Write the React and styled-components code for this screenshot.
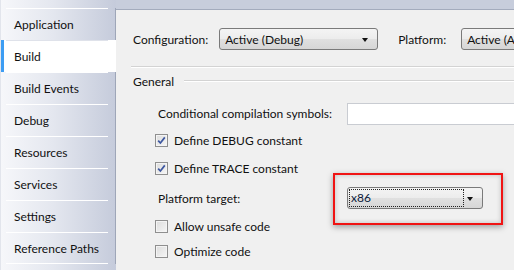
import React from 'react';
import styled, { createGlobalStyle } from 'styled-components';

const GlobalStyle = createGlobalStyle`
  html, body {
    margin: 0;
    padding: 0;
  }
  body {
    width: 514px;
    height: 270px;
    overflow: hidden;
    font-family: Lato, "Noto Sans", sans-serif;
    font-size: 12px;
    color: #111;
  }
`;

const tabs = [
  'Application',
  'Build',
  'Build Events',
  'Debug',
  'Resources',
  'Services',
  'Settings',
  'Reference Paths',
];

const Check = ({ checked }) => (
  <CheckBox>
    {checked && (
      <svg width="9" height="9" viewBox="0 0 9 9">
        <path d="M1.2 4.6 L3.4 7 L7.8 1.4" fill="none" stroke="#3d57a0" strokeWidth="1.7" />
      </svg>
    )}
  </CheckBox>
);

const App = () => {
  return (
    <Window>
      <GlobalStyle />
      <Sidebar>
        {tabs.map((t) => (
          <Tab key={t} $active={t === 'Build'}>{t}</Tab>
        ))}
      </Sidebar>
      <Panel>
        <TopRow>
          <Label $right={11}>Configuration:</Label>
          <Combo $w={159}>
            <ComboText>Active (Debug)</ComboText>
            <Arrow />
          </Combo>
          <Label $left={20} $right={15}>Platform:</Label>
          <Combo $w={120}>
            <ComboText>Active (Any CPU)</ComboText>
            <Arrow />
          </Combo>
        </TopRow>
        <Rule />
        <GroupHeader>General</GroupHeader>
        <Group>
          <Row $h={27}>
            <FieldLabel>Conditional compilation symbols:</FieldLabel>
            <TextBox />
          </Row>
          <Row $h={27}>
            <Check checked />
            <CheckLabel>Define DEBUG constant</CheckLabel>
          </Row>
          <Row $h={28}>
            <Check checked />
            <CheckLabel>Define TRACE constant</CheckLabel>
          </Row>
          <Row $h={32}>
            <FieldLabel>Platform target:</FieldLabel>
            <SelectWrap>
              <Combo $w={136}>
                <Focus>x86</Focus>
                <Arrow />
              </Combo>
              <Highlight />
            </SelectWrap>
          </Row>
          <Row $h={24}>
            <Check />
            <CheckLabel>Allow unsafe code</CheckLabel>
          </Row>
          <Row $h={27}>
            <Check />
            <CheckLabel>Optimize code</CheckLabel>
          </Row>
        </Group>
      </Panel>
    </Window>
  );
};

const Window = styled.div`
  display: flex;
  width: 514px;
  height: 270px;
  background: #c7cddc;
  overflow: hidden;
`;

const Sidebar = styled.nav`
  width: 116px;
  flex: none;
  padding-top: 8px;
  display: flex;
  flex-direction: column;
  background: linear-gradient(to right, #f6f7fa 0%, #e4e7ef 45%, #c5cbdb 100%);
  border-left: 1px solid #e2e5ec;
  box-sizing: border-box;
`;

const Tab = styled.div`
  position: relative;
  height: 32px;
  flex: none;
  display: flex;
  align-items: center;
  padding-left: ${({ $active }) => ($active ? '10px' : '13px')};
  padding-top: 1px;
  box-sizing: border-box;
  border-left: ${({ $active }) => ($active ? '3px solid #3d9df3' : 'none')};
  border-right: 1px solid ${({ $active }) => ($active ? '#fff' : '#9ea6b8')};
  background: ${({ $active }) => ($active ? '#fff' : 'transparent')};
  white-space: nowrap;

  &::before {
    content: '';
    position: absolute;
    top: 0;
    left: ${({ $active }) => ($active ? '2px' : '5px')};
    right: 7px;
    height: 1px;
    background: ${({ $active }) => ($active ? '#dfe2ea' : '#fff')};
  }

  &:last-child::after {
    content: '';
    position: absolute;
    bottom: 0;
    left: 5px;
    right: 7px;
    height: 1px;
    background: #fff;
  }
`;

const Panel = styled.main`
  flex: 1;
  margin-top: 9px;
  border-top: 1px solid #a3abbd;
  background: #f0f0f0;
  padding: 18px 0 0 17px;
  overflow: hidden;
`;

const TopRow = styled.div`
  display: flex;
  align-items: center;
  height: 22px;
  white-space: nowrap;
`;

const Label = styled.span`
  flex: none;
  margin-left: ${({ $left }) => $left || 0}px;
  margin-right: ${({ $right }) => $right || 0}px;
`;

const Combo = styled.div`
  position: relative;
  flex: none;
  width: ${({ $w }) => $w}px;
  height: 22px;
  box-sizing: border-box;
  border: 1px solid #7a7a7a;
  border-radius: 3px;
  background: linear-gradient(#f4f4f4 0%, #ececec 50%, #e0e0e0 51%, #d6d6d6 100%);
  display: flex;
  align-items: center;
  padding-left: 1px;
  overflow: hidden;
`;

const ComboText = styled.span`
  padding-left: 4px;
  white-space: nowrap;
`;

const Arrow = styled.span`
  position: absolute;
  right: 9px;
  top: 9px;
  width: 0;
  height: 0;
  border-left: 3.5px solid transparent;
  border-right: 3.5px solid transparent;
  border-top: 4px solid #111;
`;

const Focus = styled.span`
  width: 115px;
  height: 18px;
  box-sizing: border-box;
  border: 1px dotted #222;
  line-height: 16px;
  padding-left: 1px;
  color: #0c1a3a;
`;

const Rule = styled.div`
  margin: 16px 0 0 -2px;
  border-top: 1px solid #d3d3d3;
  border-bottom: 1px solid #fff;
`;

const GroupHeader = styled.div`
  display: flex;
  align-items: center;
  height: 26px;

  &::after {
    content: '';
    flex: 1;
    margin-left: 10px;
    border-top: 1px solid #d3d3d3;
    border-bottom: 1px solid #fff;
  }
`;

const Group = styled.div`
  margin-top: 6px;
  padding-left: 25px;
`;

const Row = styled.div`
  display: flex;
  align-items: center;
  height: ${({ $h }) => $h}px;
  white-space: nowrap;
`;

const FieldLabel = styled.span`
  width: 189px;
  flex: none;
`;

const TextBox = styled.div`
  width: 200px;
  height: 22px;
  flex: none;
  box-sizing: border-box;
  background: #fff;
  border: 1px solid #c9ccd2;
`;

const CheckBox = styled.span`
  width: 13px;
  height: 13px;
  flex: none;
  margin-left: -3px;
  box-sizing: border-box;
  border: 1px solid #8f8f8f;
  background: linear-gradient(135deg, #dcdcdc 0%, #f6f6f6 100%);
  box-shadow: inset 0 0 0 1px #f4f4f4;
  display: flex;
  align-items: center;
  justify-content: center;
`;

const CheckLabel = styled.span`
  margin-left: 6px;
`;

const SelectWrap = styled.div`
  position: relative;
`;

const Highlight = styled.div`
  position: absolute;
  left: -14px;
  top: -14px;
  width: 170px;
  height: 52px;
  box-sizing: border-box;
  border: 2px solid #f01414;
  box-shadow: 0 2px 6px rgba(0, 0, 0, 0.35), inset 0 0 5px rgba(0, 0, 0, 0.2);
  pointer-events: none;
`;

export default App;
